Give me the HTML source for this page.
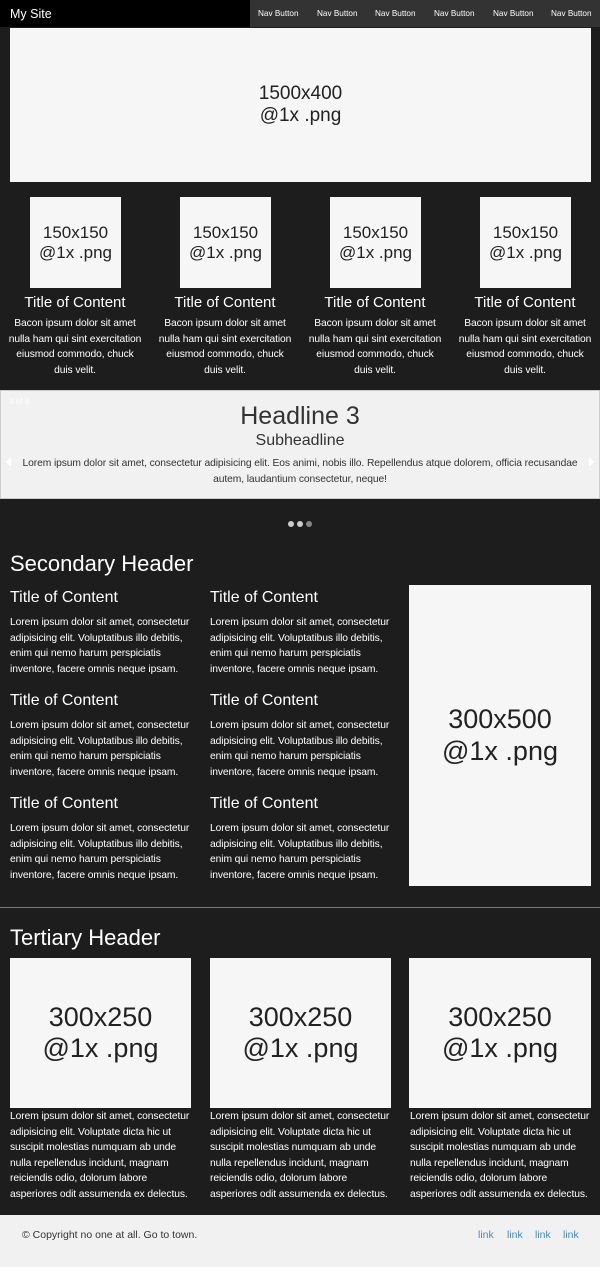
<!DOCTYPE html>
<html><head><meta charset="utf-8"><style>
*{margin:0;padding:0;box-sizing:border-box}
body{width:600px;height:1267px;background:#1d1d1d;font-family:"Liberation Sans",Arial,sans-serif;color:#fff;position:relative;overflow:hidden}
.a{position:absolute}
.ph{position:absolute;background:#f6f6f6;color:#222;display:flex;align-items:center;justify-content:center;text-align:center;line-height:1.15}
.t{font-size:15px;text-align:center;width:150px}
.p{font-size:10.3px;line-height:15.5px;white-space:nowrap;letter-spacing:-0.1px}
.pc{text-align:center;width:150px}
.h{font-size:16px;height:20px}
</style></head><body>
<div class="a" style="left:0;top:0;width:250px;height:27px;background:#000"></div>
<div class="a" style="left:250px;top:0;width:350px;height:27px;background:#333"></div>
<div class="a" style="left:10px;top:7px;font-size:12.5px">My Site</div>
<div class="a" style="left:258px;top:9px;font-size:8.2px;white-space:nowrap">
<span class="a" style="left:0">Nav Button</span><span class="a" style="left:59px">Nav Button</span><span class="a" style="left:117px">Nav Button</span><span class="a" style="left:176px">Nav Button</span><span class="a" style="left:235px">Nav Button</span><span class="a" style="left:293px">Nav Button</span></div>

<div class="ph" style="left:10px;top:28px;width:581px;height:154px;font-size:19px">1500x400<br>@1x .png</div>

<div class="ph" style="left:30px;top:197px;width:91px;height:91px;font-size:17px">150x150<br>@1x .png</div>
<div class="ph" style="left:180px;top:197px;width:91px;height:91px;font-size:17px">150x150<br>@1x .png</div>
<div class="ph" style="left:330px;top:197px;width:91px;height:91px;font-size:17px">150x150<br>@1x .png</div>
<div class="ph" style="left:480px;top:197px;width:91px;height:91px;font-size:17px">150x150<br>@1x .png</div>
<div class="a t" style="left:0;top:294px">Title of Content</div>
<div class="a t" style="left:150px;top:294px">Title of Content</div>
<div class="a t" style="left:300px;top:294px">Title of Content</div>
<div class="a t" style="left:450px;top:294px">Title of Content</div>
<div class="a p pc" style="left:0;top:316px">Bacon ipsum dolor sit amet<br>nulla ham qui sint exercitation<br>eiusmod commodo, chuck<br>duis velit.</div>
<div class="a p pc" style="left:150px;top:316px">Bacon ipsum dolor sit amet<br>nulla ham qui sint exercitation<br>eiusmod commodo, chuck<br>duis velit.</div>
<div class="a p pc" style="left:300px;top:316px">Bacon ipsum dolor sit amet<br>nulla ham qui sint exercitation<br>eiusmod commodo, chuck<br>duis velit.</div>
<div class="a p pc" style="left:450px;top:316px">Bacon ipsum dolor sit amet<br>nulla ham qui sint exercitation<br>eiusmod commodo, chuck<br>duis velit.</div>

<div class="a" style="left:0;top:390px;width:600px;height:109px;background:#f1f1f1;border:1px solid #ccc;color:#333;text-align:center">
<div style="font-size:25px;margin-top:11px;line-height:28px">Headline 3</div>
<div style="font-size:16px;line-height:20px;margin-top:1px">Subheadline</div>
<div class="p" style="margin-top:5px;color:#333">Lorem ipsum dolor sit amet, consectetur adipisicing elit. Eos animi, nobis illo. Repellendus atque dolorem, officia recusandae<br>autem, laudantium consectetur, neque!</div>
<div class="a" style="left:8px;top:6px;font-size:8px;color:#fff">3 of 3</div>
<div class="a" style="left:5px;top:66px;width:0;height:0;border:5px solid transparent;border-right:5px solid #fff;border-left:0"></div>
<div class="a" style="right:5px;top:66px;width:0;height:0;border:5px solid transparent;border-left:5px solid #fff;border-right:0"></div>
</div>
<div class="a" style="left:288px;top:521px;width:6px;height:6px;border-radius:50%;background:#ccc"></div>
<div class="a" style="left:297px;top:521px;width:6px;height:6px;border-radius:50%;background:#ccc"></div>
<div class="a" style="left:306px;top:521px;width:6px;height:6px;border-radius:50%;background:#888"></div>

<div class="a" style="left:10px;top:551px;font-size:22px">Secondary Header</div>

<div class="a" style="left:10px;top:589px;width:190px">
<div class="h">Title of Content</div><div class="p" style="margin-top:6px">Lorem ipsum dolor sit amet, consectetur<br>adipisicing elit. Voluptatibus illo debitis,<br>enim qui nemo harum perspiciatis<br>inventore, facere omnis neque ipsam.</div>
<div class="h" style="margin-top:15px">Title of Content</div><div class="p" style="margin-top:6px">Lorem ipsum dolor sit amet, consectetur<br>adipisicing elit. Voluptatibus illo debitis,<br>enim qui nemo harum perspiciatis<br>inventore, facere omnis neque ipsam.</div>
<div class="h" style="margin-top:15px">Title of Content</div><div class="p" style="margin-top:6px">Lorem ipsum dolor sit amet, consectetur<br>adipisicing elit. Voluptatibus illo debitis,<br>enim qui nemo harum perspiciatis<br>inventore, facere omnis neque ipsam.</div>
</div>
<div class="a" style="left:210px;top:589px;width:190px">
<div class="h">Title of Content</div><div class="p" style="margin-top:6px">Lorem ipsum dolor sit amet, consectetur<br>adipisicing elit. Voluptatibus illo debitis,<br>enim qui nemo harum perspiciatis<br>inventore, facere omnis neque ipsam.</div>
<div class="h" style="margin-top:15px">Title of Content</div><div class="p" style="margin-top:6px">Lorem ipsum dolor sit amet, consectetur<br>adipisicing elit. Voluptatibus illo debitis,<br>enim qui nemo harum perspiciatis<br>inventore, facere omnis neque ipsam.</div>
<div class="h" style="margin-top:15px">Title of Content</div><div class="p" style="margin-top:6px">Lorem ipsum dolor sit amet, consectetur<br>adipisicing elit. Voluptatibus illo debitis,<br>enim qui nemo harum perspiciatis<br>inventore, facere omnis neque ipsam.</div>
</div>
<div class="ph" style="left:409px;top:585px;width:182px;height:301px;font-size:27px">300x500<br>@1x .png</div>

<div class="a" style="left:0;top:907px;width:600px;height:1px;background:#777"></div>
<div class="a" style="left:10px;top:925px;font-size:22px">Tertiary Header</div>

<div class="ph" style="left:10px;top:958px;width:181px;height:150px;font-size:27px">300x250<br>@1x .png</div>
<div class="ph" style="left:210px;top:958px;width:181px;height:150px;font-size:27px">300x250<br>@1x .png</div>
<div class="ph" style="left:409px;top:958px;width:182px;height:150px;font-size:27px">300x250<br>@1x .png</div>
<div class="a p" style="left:10px;top:1109px">Lorem ipsum dolor sit amet, consectetur<br>adipisicing elit. Voluptate dicta hic ut<br>suscipit molestias numquam ab unde<br>nulla repellendus incidunt, magnam<br>reiciendis odio, dolorum labore<br>asperiores odit assumenda ex delectus.</div>
<div class="a p" style="left:210px;top:1109px">Lorem ipsum dolor sit amet, consectetur<br>adipisicing elit. Voluptate dicta hic ut<br>suscipit molestias numquam ab unde<br>nulla repellendus incidunt, magnam<br>reiciendis odio, dolorum labore<br>asperiores odit assumenda ex delectus.</div>
<div class="a p" style="left:410px;top:1109px">Lorem ipsum dolor sit amet, consectetur<br>adipisicing elit. Voluptate dicta hic ut<br>suscipit molestias numquam ab unde<br>nulla repellendus incidunt, magnam<br>reiciendis odio, dolorum labore<br>asperiores odit assumenda ex delectus.</div>

<div class="a" style="left:0;top:1215px;width:600px;height:52px;background:#f1f1f1;color:#333;font-size:10.5px">
<div class="a" style="left:22px;top:14px">© Copyright no one at all. Go to town.</div>
<div class="a" style="left:478px;top:14px;color:#3d8fc2">link</div>
<div class="a" style="left:507px;top:14px;color:#3d8fc2">link</div>
<div class="a" style="left:535px;top:14px;color:#3d8fc2">link</div>
<div class="a" style="left:563px;top:14px;color:#3d8fc2">link</div>
</div>
</body></html>
